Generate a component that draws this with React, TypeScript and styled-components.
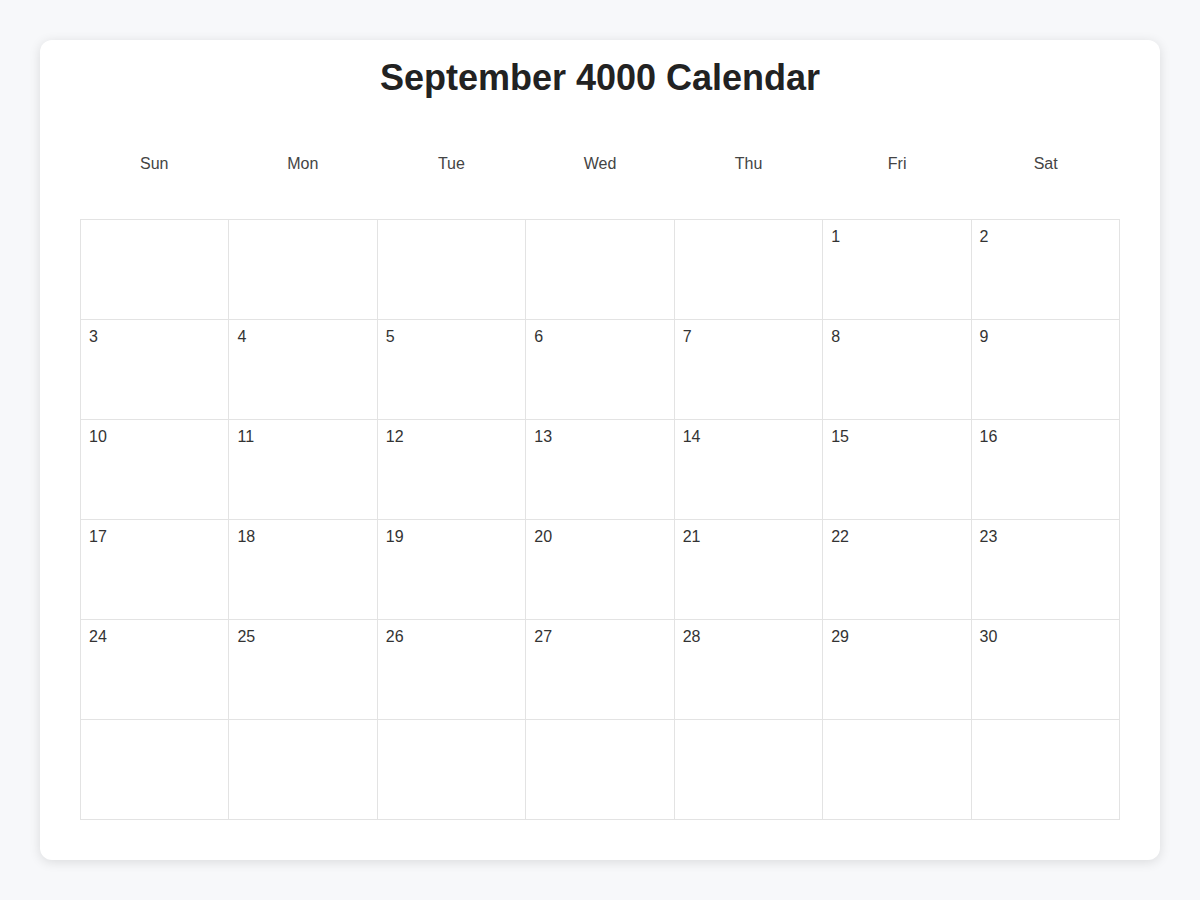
import React from "react";
import styled, { createGlobalStyle } from "styled-components";

const Global = createGlobalStyle`
  html, body { margin: 0; padding: 0; background: #f7f8fa; }
  body { font-family: "Liberation Sans", Arial, sans-serif; }
`;

const Page = styled.div`
  padding: 40px;
  box-sizing: border-box;
  width: 1200px;
  min-height: 900px;
`;

const Card = styled.div`
  background: #ffffff;
  border-radius: 12px;
  box-shadow: 0 2px 12px rgba(0, 0, 0, 0.12);
  padding: 17px 40px 40px;
`;

const Title = styled.h1`
  margin: 0;
  text-align: center;
  font-size: 36px;
  font-weight: 700;
  color: #222222;
  line-height: 42px;
`;

const HeaderRow = styled.div`
  display: grid;
  grid-template-columns: repeat(7, 1fr);
  margin-top: 55px;
  margin-bottom: 45px;
`;

const DayName = styled.div`
  text-align: center;
  font-size: 16px;
  color: #444444;
  line-height: 20px;
`;

const Grid = styled.div`
  display: grid;
  grid-template-columns: repeat(7, 1fr);
  border-top: 1px solid #e3e3e3;
  border-left: 1px solid #e3e3e3;
`;

const Cell = styled.div`
  border-right: 1px solid #e3e3e3;
  border-bottom: 1px solid #e3e3e3;
  padding: 8px;
  box-sizing: content-box;
  height: 83px;
  font-size: 16px;
  color: #333333;
  line-height: 18px;
`;

const days = ["Sun", "Mon", "Tue", "Wed", "Thu", "Fri", "Sat"];

export default function App() {
  const cells: (number | null)[] = [];
  for (let i = 0; i < 5; i++) cells.push(null);
  for (let d = 1; d <= 30; d++) cells.push(d);
  while (cells.length < 42) cells.push(null);
  return (
    <>
      <Global />
      <Page>
        <Card>
          <Title>September 4000 Calendar</Title>
          <HeaderRow>
            {days.map((d) => (
              <DayName key={d}>{d}</DayName>
            ))}
          </HeaderRow>
          <Grid>
            {cells.map((c, i) => (
              <Cell key={i}>{c ?? ""}</Cell>
            ))}
          </Grid>
        </Card>
      </Page>
    </>
  );
}
